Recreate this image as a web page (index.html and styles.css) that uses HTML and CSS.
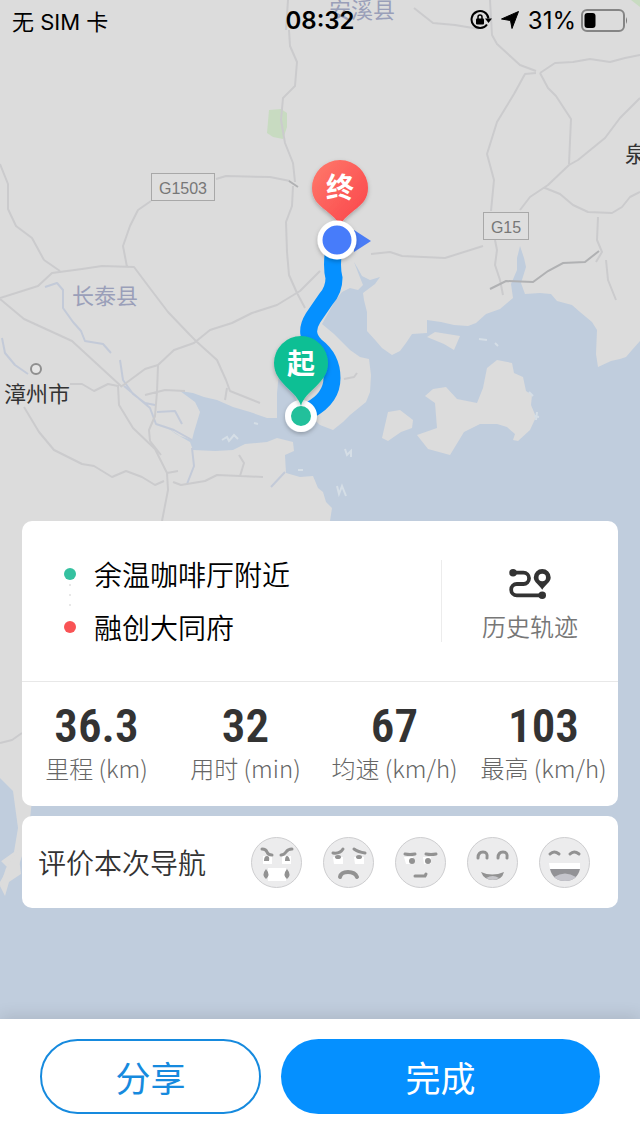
FILE: index.html
```html
<!doctype html>
<html lang="zh-CN">
  <head>
    <meta charset="UTF-8" />
    <meta name="viewport" content="width=device-width, initial-scale=1.0" />
    <title>导航结束</title>
    <link rel="stylesheet" href="styles.css" />
  </head>
  <body>
    <svg class="map" viewBox="0 0 640 1136" preserveAspectRatio="xMidYMid slice" aria-hidden="true">
      <defs>
        <linearGradient id="red-pin" x1="0" y1="0" x2="1" y2="1">
          <stop offset="0" stop-color="#ff7a6c" />
          <stop offset="1" stop-color="#fa4248" />
        </linearGradient>
        <filter id="shadow" x="-30%" y="-30%" width="160%" height="160%">
          <feDropShadow dx="0" dy="2" stdDeviation="2" flood-opacity="0.25" />
        </filter>
      </defs>

      <rect width="640" height="1136" fill="#dcdcdc" />
      <path fill="#c8dbc1" d="M269 110l12-1 6 4v14l-4 12-10-2-6-4z" />
      <path fill="#c8dbc1" d="M631 0h9v7z" />

      <!-- sea -->
      <path
        class="water"
        d="M640 341L632 350 626 357 620 359 611 361 598 367 596 354 597 330 592 322 580 312 572 305 557 301 551 294 540 293 525 294 521 283 526 267 524 258 520 246 517 258 517 270 511 284 513 298 500 309 486 314 476 323 468 326 454 325 441 322 427 320 427 333 412 334 406 343 400 351 392 355 382 348 376 341 367 331 367 312 364 300 363 293 375 284 380 277 370 280 362 276 357 267 354 262 359 275 363 285 358 290 350 288 342 292 335 301 322 324 334 334 350 350 360 357 369 359 371 375 370 392 366 402 350 415 343 422 333 430 320 425 306 412 296 400 288 370 286 344 276 350 280 362 277 393 277 418 267 418 250 412 233 407 217 400 204 397 193 393 180 391 195 402 200 412 197 422 194 432 192 440 180 436 162 424 176 434 190 442 193 450 215 451 233 450 245 444 267 442 277 438 293 442 294 451 285 455 286 473 300 477 313 476 318 488 323 492 326 502 332 508 330 521 280 620 180 700 90 750 32 800 28 838 18 868 0 886 0 1136 640 1136z"
      />
      <path class="water" d="M0 778l13 13 5 37-4 24-14 10z" />
      <path class="water" d="M0 860l8 8-8 14z" />
      <path class="land" d="M18 850l-12 18-6 18 5 10 4-14 12-8z" />

      <!-- islands -->
      <path
        class="land"
        d="M497 360L512 363 514 373 523 377 526 391 532 395 531 405 536 417 530 430 518 441 513 440 515 434 507 427 497 424 480 424 464 432 450 455 428 449 417 435 437 428 435 403 425 396 433 389 446 387 457 399 477 403 483 388 487 368zM388 412l12-2 13 10-1 8-11 4-13 9-6-3zM427 337l8-5 25 4-6 14-10-6z"
      />
      <path class="surf" d="M222 440l5-3 2 4 5-6 4 4M254 423l4 1M479 339l8 1M495 343l3 3M345 449l2 6 4-4v6M337 486l2 8 3-8 4 10M529 392l4 4M534 416l5 1M537 412l-1 8M298 470h5" />

      <!-- rivers -->
      <path
        class="river"
        d="M2 338l3 15 10 12 13 9M45 287l12-4 6 7 0 18 10 14 8 9 4 10 18 3 8 9M120 360l3 20 10 14 12 9 10 2M157 412l18-1 7 13M124 386l12 10 14 12 6 16 18 6 18 10M192 448l2 18-7 18M271 487l14-15"
      />

      <!-- roads -->
      <path
        class="road"
        d="M0 164L8 184 8 209 16 226 32 238 44 260M44 260L60 271M0 298L38 286 52 273 82 269 102 266 134 267 149 287 168 312 190 335 197 342 217 360 226 380 230 391 260 403M0 299L24 319 72 341 97 364 122 387M122 386L145 369 158 365 174 350 194 343 210 330 232 323 252 313 277 305 300 291 320 271M151 201L138 210 130 226 123 246 127 267M216 179L226 176 270 177 290 181M289 30L290 46 297 62 295 86 283 98 281 120 285 143 293 163 295 182M293 186L292 206 286 222 287 252 289 275 297 293 305 308M70 384L82 384 94 391 108 384 118 386 119 405 133 428 155 449 167 473 168 490 162 521M24 407L39 432 54 450 82 464 94 466 112 477 126 471 142 477 155 485 164 481M145 395L165 390 185 391M158 365L157 392 155 416 149 430 150 441 161 455M167 473L178 471M173 482L181 485 205 481 217 475 240 476 263 477M239 455L244 463 240 476M227 388L225 400M371 254L390 252 402 256 445 258 483 246M414 8L433 23 455 25 479 29M490 0L492 35 497 44 520 65 536 71M536 73L525 74 514 94 497 122 487 154 494 180 491 211M540 73L548 88 556 96 571 119 570 141 569 164M640 98L620 118 605 138 578 160 569 165 548 185 530 197 520 210M540 73L555 63 573 62 590 59 610 62 625 58 640 55M545 188L560 194 573 205 588 212 612 213 622 207 630 197 640 192M495 240L497 250 495 265 500 280 503 295M598 217L597 240 602 252 596 262M606 260L608 280 616 300M0 743l12-3 10-7M288 0l-2 30"
      />
      <path class="road" d="M344 379l10-2 3-4" />
      <path class="road-dark" d="M490 289l16-8 27 1 15-11 15-8 22-1 14-11M289 181l9 6" />

      <!-- place names and road signs -->
      <g class="place county">
        <text x="329" y="18">安溪县</text>
        <text x="72" y="304">长泰县</text>
      </g>
      <g class="place city">
        <text x="4" y="402">漳州市</text>
        <text x="625" y="162">泉</text>
      </g>
      <circle cx="36" cy="369" r="5" fill="#e6e6e6" stroke="#8f8f8f" stroke-width="2" />
      <g class="sign">
        <rect x="151.500" y="173.500" width="63" height="27" />
        <text x="183" y="194">G1503</text>
        <rect x="483.500" y="212.500" width="45" height="27" />
        <text x="506" y="233">G15</text>
      </g>

      <!-- driven route -->
      <path
        class="route"
        d="M334 248Q331 266 334 278 334 290 326 299L313 318Q303 334 316 346 332 358 332 378 332 398 310 410"
      />

      <!-- end point -->
      <g filter="url(#shadow)">
        <path fill="url(#red-pin)" d="M340 226C333 210 312 208 312 188a28 28 0 0 1 56 0c0 20-21 22-28 38z" />
      </g>
      <path fill="#4a7cf5" d="M354 230l17 11-17 11z" />
      <circle cx="337" cy="240" r="17" fill="#477bfa" stroke="#fff" stroke-width="5" filter="url(#shadow)" />
      <text class="pin-text" x="340" y="198">终</text>

      <!-- start point -->
      <circle cx="301" cy="416" r="13" fill="#23c09b" stroke="#fff" stroke-width="6" filter="url(#shadow)" />
      <path fill="#0dbf94" d="M301 406C297 390 274 384 274 363a27 27 0 0 1 54 0c0 21-23 27-27 43z" filter="url(#shadow)" />
      <text class="pin-text" x="301" y="374">起</text>
    </svg>

    <header class="status-bar">
      <span class="carrier">无 SIM 卡</span>
      <time class="clock">08:32</time>
      <div class="status-icons">
        <svg width="22" height="22" viewBox="0 0 22 22" aria-hidden="true">
          <path d="M17 15.500a8.500 8.500 0 1 1 1.500-6" fill="none" stroke="#000" stroke-width="2" />
          <path d="M15 9.500h7l-3.500 4.500z" />
          <rect x="6" y="9.500" width="8" height="6" rx="1" />
          <path d="M8 10V8a2 2 0 0 1 4 0v2" fill="none" stroke="#000" stroke-width="1.500" />
        </svg>
        <svg width="20" height="20" viewBox="0 0 20 20" aria-hidden="true">
          <path d="M18.500 1.500L12 18.500 10.500 10.500 1.500 9z" stroke="#000" stroke-linejoin="round" />
        </svg>
        <span>31%</span>
        <svg width="48" height="24" viewBox="0 0 48 24" aria-hidden="true">
          <rect x="2" y="2" width="42" height="21" rx="5" fill="none" stroke="#858585" stroke-width="2" />
          <rect x="4.500" y="5" width="11" height="15" rx="3" />
          <path d="M46 9q2 3.500 0 7z" fill="#777" />
        </svg>
      </div>
    </header>

    <main class="panel">
      <section class="card">
        <div class="trip">
          <ul class="stops">
            <li class="stop start">余温咖啡厅附近</li>
            <li class="stop end">融创大同府</li>
          </ul>
          <button class="history" type="button">
            <svg width="46" height="34" viewBox="0 0 46 34" aria-hidden="true">
              <path d="M4 5h12a6 6 0 0 1 0 12H9a6 6 0 0 0 0 12h27" fill="none" stroke="#333" stroke-width="4" />
              <circle cx="5" cy="5" r="4" fill="#333" />
              <circle cx="36" cy="29" r="4" fill="#333" />
              <path d="M36 23c-3-5-9-8-9-13a9 9 0 0 1 18 0c0 5-6 8-9 13zM36 6a4 4 0 1 0 0 8 4 4 0 0 0 0-8z" fill="#333" fill-rule="evenodd" />
            </svg>
            历史轨迹
          </button>
        </div>
        <dl class="stats">
          <div class="stat">
            <dt>里程 (km)</dt>
            <dd>36.3</dd>
          </div>
          <div class="stat">
            <dt>用时 (min)</dt>
            <dd>32</dd>
          </div>
          <div class="stat">
            <dt>均速 (km/h)</dt>
            <dd>67</dd>
          </div>
          <div class="stat">
            <dt>最高 (km/h)</dt>
            <dd>103</dd>
          </div>
        </dl>
      </section>

      <section class="card rating">
        <h2>评价本次导航</h2>
        <div class="faces">
          <button class="face" type="button" aria-label="非常差">
            <svg viewBox="0 0 51 51">
              <circle class="head" cx="25.500" cy="25.500" r="25" />
              <path d="M12 19h9v8h-9zM31 19h9v8h-9zM17 31h18v13H17z" fill="#fff" />
              <path class="line" d="M11 12q4 0 5 3t5 3M41 12q-4 0-6 3t-5 3" />
              <path class="solid" d="M13 24q0-5 3-5t2 5zM34 24q0-5 2-5t3 5zM15 32q5 6 0 10-5-4 0-10zM36 32q5 6 0 10-5-4 0-10z" />
            </svg>
          </button>
          <button class="face" type="button" aria-label="差">
            <svg viewBox="0 0 51 51">
              <circle class="head" cx="25.500" cy="25.500" r="25" />
              <path d="M10 20h10v7H11zM31 20h10v7H32z" fill="#fff" />
              <path class="line" d="M10 16q7 1 10-4M42 16q-7-1-11-4" />
              <ellipse class="solid" cx="15" cy="20" rx="3" ry="2" />
              <ellipse class="solid" cx="36" cy="20" rx="3" ry="2" />
              <path d="M17 40q1-5 8-5t9 5" fill="none" stroke="#929292" stroke-width="4" stroke-linecap="round" />
            </svg>
          </button>
          <button class="face" type="button" aria-label="一般">
            <svg viewBox="0 0 51 51">
              <circle class="head" cx="25.500" cy="25.500" r="25" />
              <path d="M9 20h9v7h-7zM28 20h8v7h-7z" fill="#fff" />
              <path class="line" d="M10 17q5 1 10 0M31 17q5 1 10 0M20 39h10l1-2" />
              <circle class="solid" cx="17" cy="24" r="3" />
              <circle class="solid" cx="33" cy="24" r="3" />
            </svg>
          </button>
          <button class="face" type="button" aria-label="好">
            <svg viewBox="0 0 51 51">
              <circle class="head" cx="25.500" cy="25.500" r="25" />
              <path class="line" d="M11 21q0-6 5-6t4 6M31 21q0-6 5-6t4 6" />
              <path d="M14 35q11 5 23 0-2 8-11 8t-12-8z" fill="#929292" />
              <path d="M19 41q7-4 13 0-6 4-13 0z" fill="#c7c7cb" />
            </svg>
          </button>
          <button class="face" type="button" aria-label="非常好">
            <svg viewBox="0 0 51 51">
              <circle class="head" cx="25.500" cy="25.500" r="25" />
              <path class="line" d="M11 17q4-4 9 0M31 17q4-4 9 0" />
              <path d="M10 26h31v6H11z" fill="#fff" />
              <path d="M11 32h30q-3 12-15 12T11 32z" fill="#929296" />
              <path d="M15 40q11-7 22 0-4 4-11 4t-11-4z" fill="#c5c5cc" />
            </svg>
          </button>
        </div>
      </section>
    </main>

    <footer class="actions">
      <button class="btn share" type="button">分享</button>
      <button class="btn done" type="button">完成</button>
    </footer>
  </body>
</html>
```

FILE: styles.css
```css
* {
  box-sizing: border-box;
}
body {
  margin: 0;
  min-height: 100vh;
  display: flex;
  flex-direction: column;
  position: relative;
  font-family: "Noto Sans CJK SC", sans-serif;
  font-weight: 350;
  color: #333;
}
button {
  font: inherit;
  border: none;
  background: none;
  padding: 0;
  cursor: pointer;
}
svg {
  display: block;
}

/* map */
.map {
  position: absolute;
  inset: 0;
  width: 100%;
  height: 100%;
  z-index: -1;
}
.water {
  fill: #c0cddd;
}
.land {
  fill: #dcdcdc;
}
.surf {
  fill: none;
  stroke: #d5dee6;
  stroke-width: 2;
}
.river {
  fill: none;
  stroke: #c3cad8;
  stroke-width: 2;
  stroke-linejoin: round;
}
.road {
  fill: none;
  stroke: #cbcbcd;
  stroke-width: 2;
  stroke-linejoin: round;
}
.road-dark {
  fill: none;
  stroke: #b0b1b3;
  stroke-width: 2;
}
.place {
  font-size: 22px;
  font-weight: 400;
}
.county {
  fill: #9a9fb9;
}
.city {
  fill: #333;
}
.sign rect {
  fill: #dedede;
  stroke: #a8a8a8;
}
.sign text {
  font-family: "Liberation Sans", Arial, sans-serif;
  font-size: 16px;
  font-weight: 400;
  fill: #777;
  text-anchor: middle;
}
.route {
  fill: none;
  stroke: #0590ff;
  stroke-width: 17;
}
.pin-text {
  font-size: 28px;
  font-weight: 700;
  fill: #fff;
  text-anchor: middle;
}

/* status bar */
.status-bar {
  display: grid;
  grid-template-columns: 1fr auto 1fr;
  align-items: center;
  height: 40px;
  padding: 0 12px;
  font-family: Inter, "Noto Sans CJK SC", sans-serif;
  font-size: 24px;
  font-weight: 400;
  color: #000;
}
.carrier {
  font-size: 22px;
}
.clock {
  font-weight: 600;
}
.status-icons {
  display: flex;
  align-items: center;
  justify-content: flex-end;
  gap: 8px;
}
.status-icons span {
  margin-right: -4px;
}

/* cards */
.panel {
  margin-top: auto;
  padding: 0 22px 111px;
  display: flex;
  flex-direction: column;
  gap: 10px;
}
.card {
  background: #fff;
  border-radius: 10px;
}
.trip {
  display: flex;
  align-items: center;
  height: 161px;
  border-bottom: 1px solid #e8e8e8;
}
.stops {
  flex: 1;
  margin: 0;
  padding: 0 0 0 42px;
  list-style: none;
}
.stop {
  position: relative;
  padding-left: 30px;
  font-size: 28px;
  line-height: 53px;
  color: #000;
}
.stop::before {
  content: "";
  position: absolute;
  left: 0;
  top: 20px;
  width: 12px;
  height: 12px;
  border-radius: 50%;
}
.start::before {
  background: #35c1a0;
}
.end::before {
  background: #f95355;
}
.start::after {
  content: "";
  position: absolute;
  left: 5px;
  top: 36px;
  width: 2px;
  height: 30px;
  background: repeating-linear-gradient(#e8e8e8 0 2px, transparent 2px 10px);
}
.history {
  width: 177px;
  height: 82px;
  padding-top: 8px;
  border-left: 1px solid #ececec;
  display: flex;
  flex-direction: column;
  align-items: center;
  gap: 10px;
  font-size: 24px;
  line-height: 32px;
  color: #777;
}
.stats {
  display: grid;
  grid-template-columns: repeat(4, 1fr);
  height: 124px;
  margin: 0;
  padding-top: 20px;
}
.stat {
  display: flex;
  flex-direction: column-reverse;
  justify-content: flex-end;
  align-items: center;
  white-space: nowrap;
}
.stat dt {
  font-size: 24px;
  font-weight: 300;
  line-height: 36px;
  color: #666;
}
.stat dd {
  margin: 0;
  font-family: "Roboto Condensed", "Liberation Sans Narrow", "Noto Sans CJK SC", sans-serif;
  font-size: 47px;
  font-weight: 600;
  line-height: 48px;
}
.rating {
  display: flex;
  align-items: center;
  justify-content: space-between;
  height: 92px;
  padding: 0 28px 0 16px;
}
.rating h2 {
  margin: 0;
  font-size: 28px;
  font-weight: 350;
}
.faces {
  display: flex;
  gap: 21px;
}
.face {
  width: 51px;
  height: 51px;
}
.head {
  fill: #ececed;
  stroke: #cdcdcf;
}
.line {
  fill: none;
  stroke: #929292;
  stroke-width: 3;
  stroke-linecap: round;
}
.solid {
  fill: #929292;
}

/* bottom buttons */
.actions {
  display: grid;
  grid-template-columns: 221fr 319fr;
  gap: 20px;
  padding: 20px 40px 22px;
  background: #fff;
  box-shadow: 0 -2px 16px rgba(0, 0, 0, 0.12);
}
.btn {
  height: 75px;
  border-radius: 38px;
  font-size: 35px;
  font-weight: 400;
}
.share {
  border: 2px solid #168ade;
  color: #168ade;
}
.done {
  background: #0590ff;
  color: #fff;
}
```
